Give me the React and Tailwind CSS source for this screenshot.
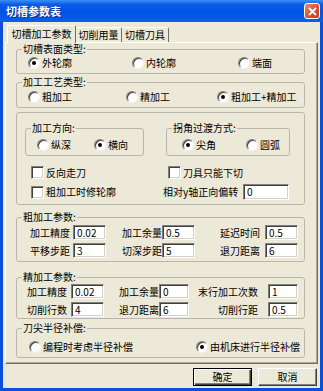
import React from 'react'

function Radio({ checked, label, className = '' }) {
  return (
    <div className={`flex items-center gap-[2px] h-[13px] ${className}`}>
      <span className="relative w-[12px] h-[12px] shrink-0 rounded-full bg-white border border-t-[#808080] border-l-[#808080] border-r-[#f4f3ee] border-b-[#f4f3ee] shadow-[inset_1px_1px_0_#404040] flex items-center justify-center">
        {checked && <span className="w-[4px] h-[4px] rounded-full bg-black" />}
      </span>
      <span className="whitespace-nowrap leading-[12px]">{label}</span>
    </div>
  )
}

function Check({ label, className = '' }) {
  return (
    <div className={`flex items-center gap-[2px] h-[13px] ${className}`}>
      <span className="w-[13px] h-[13px] shrink-0 bg-white border border-t-[#808080] border-l-[#808080] border-r-white border-b-white shadow-[inset_1px_1px_0_#404040,inset_-1px_-1px_0_#d4d0c8]" />
      <span className="whitespace-nowrap leading-[12px]">{label}</span>
    </div>
  )
}

function Field({ value, className = '' }) {
  return (
    <div className={`h-[15px] shrink-0 bg-white border border-t-[#808080] border-l-[#808080] border-r-white border-b-white shadow-[inset_1px_1px_0_#404040,inset_-1px_-1px_0_#d4d0c8] pl-[3px] leading-[13px] ${className}`}>
      {value}
    </div>
  )
}

function Group({ title, className = '', children }) {
  return (
    <fieldset className={`border border-[#b9b7ab] rounded-[3px] ${className}`}>
      {title && <legend className="ml-[5px] px-[1px] leading-[12px] h-[12px]">{title}</legend>}
      {children}
    </fieldset>
  )
}

function Btn({ label, primary }) {
  return (
    <div className={`w-[59px] h-[18px] flex items-center justify-center bg-[#ece9d8] leading-[12px] ${primary ? 'border border-black shadow-[inset_1px_1px_0_#fff,inset_-1px_-1px_0_#404040,inset_-2px_-2px_0_#808080]' : 'border border-t-white border-l-white border-r-[#404040] border-b-[#404040] shadow-[inset_-1px_-1px_0_#808080]'}`}>
      {label}
    </div>
  )
}

export default function App() {
  return (
    <div className="w-[323px] h-[391px] flex flex-col bg-[#0b4fdc] font-['Noto_Sans_CJK_SC','Liberation_Sans',sans-serif] text-[10px] leading-[12px] text-black select-none">
      {/* title bar */}
      <div className="h-[22px] shrink-0 flex items-center justify-between pl-[6px] pr-[3px] bg-[linear-gradient(180deg,#3d8ff6_0%,#0a5ce8_20%,#0052e4_55%,#0a5fea_100%)]">
        <span className="text-white font-bold text-[11px] leading-[12px] [text-shadow:1px_1px_0_#0a2f8a]">切槽参数表</span>
        <div className="w-[16px] h-[16px] rounded-[3px] border border-white bg-[linear-gradient(135deg,#ec8b66_0%,#d9522a_55%,#c0401c_100%)] flex items-center justify-center">
          <svg width="9" height="9" viewBox="0 0 9 9">
            <path d="M1 1L8 8M8 1L1 8" stroke="#fff" strokeWidth="1.8" />
          </svg>
        </div>
      </div>

      {/* body */}
      <div className="flex-1 mx-[3px] mb-[3px] bg-[#ece9d8] flex flex-col px-[2px]">
        {/* tabs */}
        <div className="h-[20px] flex items-end pl-[2px] relative z-10">
          <div className="w-[69px] h-[18px] -mb-[1px] bg-[#ece9d8] border-t border-l border-white border-r border-r-[#716f64] rounded-t-[2px] flex items-start justify-center pt-[2px]">切槽加工参数</div>
          <div className="w-[46px] h-[15px] border-t border-white border-r border-r-[#716f64] rounded-t-[2px] flex items-center justify-center">切削用量</div>
          <div className="w-[47px] h-[15px] border-t border-white border-r border-r-[#716f64] rounded-t-[2px] flex items-center justify-center">切槽刀具</div>
        </div>

        {/* panel */}
        <div className="h-[322px] border border-t-white border-l-white border-r-[#716f64] border-b-[#716f64] shadow-[inset_-1px_-1px_0_#aca899] flex flex-col pl-[10px] pr-[12px]">
          <Group title="切槽表面类型:" className="pt-[1px] pb-[4px]">
            <div className="flex pl-[11px]">
              <Radio checked label="外轮廓" className="w-[104px]" />
              <Radio label="内轮廓" className="w-[106px]" />
              <Radio label="端面" />
            </div>
          </Group>

          <Group title="加工工艺类型:" className="mt-[2px] pt-[2px] pb-[4px]">
            <div className="flex pl-[11px]">
              <Radio label="粗加工" className="w-[98px]" />
              <Radio label="精加工" className="w-[91px]" />
              <Radio checked label="粗加工+精加工" />
            </div>
          </Group>

          <Group className="mt-[4px] pt-[9px] pb-[4px]">
            <div className="flex pl-[8px]">
              <Group title="加工方向:" className="w-[119px] pt-[4px] pb-[4px]">
                <div className="flex pl-[11px]">
                  <Radio label="纵深" className="w-[57px]" />
                  <Radio checked label="横向" />
                </div>
              </Group>
              <Group title="拐角过渡方式:" className="ml-[22px] w-[124px] pt-[4px] pb-[4px]">
                <div className="flex pl-[15px]">
                  <Radio checked label="尖角" className="w-[64px]" />
                  <Radio label="圆弧" />
                </div>
              </Group>
            </div>
            <div className="flex mt-[10px] pl-[14px]">
              <Check label="反向走刀" className="w-[137px]" />
              <Check label="刀具只能下切" />
            </div>
            <div className="flex items-center mt-[5px] pl-[14px]">
              <Check label="粗加工时修轮廓" className="w-[132px]" />
              <span className="w-[80px] whitespace-nowrap">相对y轴正向偏转</span>
              <Field value="0" className="w-[46px] h-[16px]" />
            </div>
          </Group>

          <Group title="粗加工参数:" className="mt-[6px] pt-[2px] pb-[3px]">
            <div className="flex flex-col gap-[3px] pl-[13px] pr-[6px]">
              <div className="flex items-center">
                <span className="w-[43px]">加工精度</span>
                <Field value="0.02" className="w-[33px]" />
                <span className="w-[40px] ml-[16px]">加工余量</span>
                <Field value="0.5" className="w-[33px]" />
                <span className="flex-1 text-right pr-[5px]">延迟时间</span>
                <Field value="0.5" className="w-[33px]" />
              </div>
              <div className="flex items-center">
                <span className="w-[43px]">平移步距</span>
                <Field value="3" className="w-[33px]" />
                <span className="w-[40px] ml-[16px]">切深步距</span>
                <Field value="5" className="w-[33px]" />
                <span className="flex-1 text-right pr-[5px]">退刀距离</span>
                <Field value="6" className="w-[33px]" />
              </div>
            </div>
          </Group>

          <Group title="精加工参数:" className="mt-[9px] pt-[1px] pb-[1px]">
            <div className="flex flex-col gap-[3px] pl-[10px] pr-[6px]">
              <div className="flex items-center">
                <span className="w-[44px]">加工精度</span>
                <Field value="0.02" className="w-[33px]" />
                <span className="w-[40px] ml-[15px]">加工余量</span>
                <Field value="0" className="w-[30px]" />
                <span className="flex-1 text-right pr-[10px]">末行加工次数</span>
                <Field value="1" className="w-[30px]" />
              </div>
              <div className="flex items-center">
                <span className="w-[44px]">切削行数</span>
                <Field value="4" className="w-[33px]" />
                <span className="w-[40px] ml-[15px]">退刀距离</span>
                <Field value="6" className="w-[30px]" />
                <span className="flex-1 text-right pr-[10px]">切削行距</span>
                <Field value="0.5" className="w-[30px]" />
              </div>
            </div>
          </Group>

          <Group title="刀尖半径补偿:" className="mt-[3px] pt-[6px] pb-[4px]">
            <div className="flex pl-[12px]">
              <Radio label="编程时考虑半径补偿" className="w-[167px]" />
              <Radio checked label="由机床进行半径补偿" />
            </div>
          </Group>
        </div>

        {/* buttons */}
        <div className="flex justify-end gap-[6px] mt-[4px] pr-[1px]">
          <Btn label="确定" primary />
          <Btn label="取消" />
        </div>
      </div>
    </div>
  )
}
